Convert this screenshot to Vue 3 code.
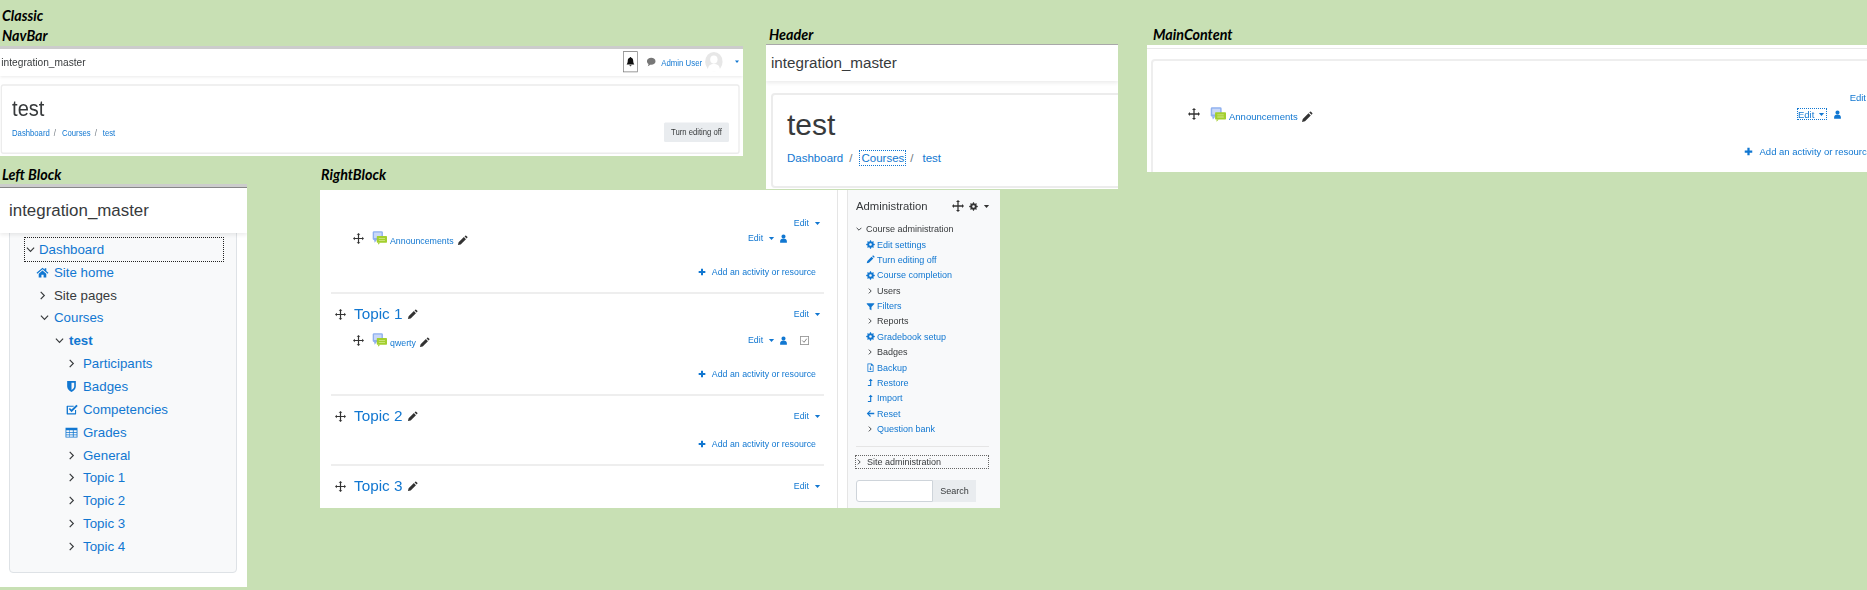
<script setup>
const gear = (() => {
  let d = ''
  const teeth = 8
  for (let i = 0; i < teeth * 4; i++) {
    const r = [11.5, 11.5, 8.5, 8.5][i % 4]
    const a = ((i - 0.5) / (teeth * 4)) * Math.PI * 2
    d += (i ? 'L' : 'M') + (12 + r * Math.cos(a)).toFixed(2) + ' ' + (12 + r * Math.sin(a)).toFixed(2)
  }
  return d + 'zM12 8.500a3.500 3.500 0 1 0 0 7 3.500 3.500 0 0 0 0-7z'
})()

const table = (() => {
  let d = 'M1 3h22v18H1z'
  for (const y of [8, 12.5, 17]) {
    for (const x of [2.5, 9, 16]) d += `M${x} ${y}h5.500v3h-5.500z`
  }
  return d
})()

const I = {
  move: 'M12 0l4 4h-2.700v6.700H20V8l4 4-4 4v-2.700h-6.700V20H16l-4 4-4-4h2.700v-6.700H4V16l-4-4 4-4v2.700h6.700V4H8z',
  pencil: 'M2 22l1.500-6L15 4.500l4.500 4.500L8 20.500zM16.500 3l1.500-1.500a1.500 1.500 0 0 1 2 0l2.500 2.500a1.500 1.500 0 0 1 0 2L21 7.500z',
  person: 'M12 12a5.500 5.500 0 1 0 0-11 5.500 5.500 0 0 0 0 11zM3 23v-4c0-4 3-6.500 5.500-6.500h7C18 12.500 21 15 21 19v4z',
  plus: 'M9 2h6v7h7v6h-7v7H9v-7H2V9h7z',
  caret: 'M3 7h18l-9 10z',
  home: 'M12 3L1 12.500l1.500 1.700L12 6l9.500 8.200 1.500-1.700-4-3.400V4h-3v2.500zM5 14.500V21h5v-5h4v5h5v-6.500L12 8.500z',
  shield: 'M4 2h16v10c0 5-4 8-8 10-4-2-8-5-8-10zM12 5v13.500c2.500-1.500 5-3.500 5-6.500V5z',
  check: 'M4 5h12v2H5.500v12h13v-6h2v7a1 1 0 0 1-1 1H4a1 1 0 0 1-1-1V6a1 1 0 0 1 1-1zM7 11l2-2 3 3 9-9 2.500 2.500L12 17z',
  table,
  gear,
  filter: 'M2 3h20v2.500L14.500 13v9l-5-3v-6L2 5.500z',
  file: 'M4 1h11l5 5v17H4zM6 3v18h12V7h-5V3zM11 9h2v6h2.500L12 19.500 8.500 15H11z',
  up: 'M5 21v-2.500h6V8H7l5.500-6L18 8h-4v13z',
  back: 'M11 3l2.200 2.200L8 10.300h14v3.400H8l5.200 5.100L11 21 2 12z',
  bell: 'M12 1a2 2 0 0 1 2 2c3.500.7 5 3.600 5 7 0 5 2 6 3 8H2c1-2 3-3 3-8 0-3.400 1.500-6.300 5-7a2 2 0 0 1 2-2zM9.500 20h5a2.500 2.500 0 0 1-5 0z',
  comment: 'M12 3c6 0 11 3.500 11 8s-5 8-11 8c-1 0-2 0-3-.3C7.500 20.500 5 21.500 3 22c1-1.300 2-3 2-4.800C2.500 15.700 1 13.500 1 11c0-4.500 5-8 11-8z',
}

const tree = [
  { label: 'Site home', pad: 20, icon: 'home' },
  { label: 'Site pages', pad: 20, chev: 'right', plain: true },
  { label: 'Courses', pad: 20, chev: 'down' },
  { label: 'test', pad: 35, chev: 'down', strong: true },
  { label: 'Participants', pad: 49, chev: 'right' },
  { label: 'Badges', pad: 49, icon: 'shield' },
  { label: 'Competencies', pad: 49, icon: 'check' },
  { label: 'Grades', pad: 49, icon: 'table' },
  { label: 'General', pad: 49, chev: 'right' },
  { label: 'Topic 1', pad: 49, chev: 'right' },
  { label: 'Topic 2', pad: 49, chev: 'right' },
  { label: 'Topic 3', pad: 49, chev: 'right' },
  { label: 'Topic 4', pad: 49, chev: 'right' },
]

const sections = [
  { key: 'intro', activity: { name: 'Announcements' }, add: true },
  { key: 't1', title: 'Topic 1', activity: { name: 'qwerty', done: true }, add: true },
  { key: 't2', title: 'Topic 2', add: true },
  { key: 't3', title: 'Topic 3' },
]

const admin = [
  { label: 'Edit settings', icon: 'gear' },
  { label: 'Turn editing off', icon: 'pencil' },
  { label: 'Course completion', icon: 'gear' },
  { label: 'Users', plain: true },
  { label: 'Filters', icon: 'filter' },
  { label: 'Reports', plain: true },
  { label: 'Gradebook setup', icon: 'gear' },
  { label: 'Badges', plain: true },
  { label: 'Backup', icon: 'file' },
  { label: 'Restore', icon: 'up' },
  { label: 'Import', icon: 'up' },
  { label: 'Reset', icon: 'back' },
  { label: 'Question bank', link: true },
]
</script>

<template>
  <div class="canvas">
    <span class="label l-classic">Classic</span>
    <span class="label l-navbar">NavBar</span>
    <span class="label l-left">Left Block</span>
    <span class="label l-right">RightBlock</span>
    <span class="label l-header">Header</span>
    <span class="label l-main">MainContent</span>

    <!-- NavBar -->
    <section class="panel p-navbar soft">
      <div class="squeezed">
        <div class="rule thick"></div>
        <div class="brand-bar nav-bar">
          <span class="brand">integration_master</span>
          <div class="nav-right">
            <span class="bell-box">
              <svg class="ic s14 black" viewBox="0 0 24 24"><path :d="I.bell" /></svg>
            </span>
            <svg class="ic s14 grey comment" viewBox="0 0 24 24"><path :d="I.comment" /></svg>
            <a class="link user">Admin User</a>
            <svg class="avatar" viewBox="0 0 26 26">
              <circle cx="13" cy="13" r="13" fill="#e7e7e7" />
              <circle cx="13" cy="10" r="5.500" fill="#fff" />
              <path d="M4 24c0-6 4-8 9-8s9 2 9 8a13 13 0 0 1-18 0z" fill="#fff" />
            </svg>
            <svg class="ic s8 blue nav-caret" viewBox="0 0 24 24"><path :d="I.caret" /></svg>
          </div>
        </div>
        <div class="head-card nav-card">
          <div>
            <h1 class="title">test</h1>
            <nav class="crumbs">
              <a class="link">Dashboard</a><i>/</i><a class="link">Courses</a><i>/</i><a class="link">test</a>
            </nav>
          </div>
          <button class="edit-btn">Turn editing off</button>
        </div>
      </div>
    </section>

    <!-- Header -->
    <section class="panel p-header">
      <div class="rule"></div>
      <div class="brand-bar header-bar"><span class="brand">integration_master</span></div>
      <div class="head-card header-card">
        <h1 class="title">test</h1>
        <nav class="crumbs">
          <a class="link">Dashboard</a><i>/</i><a class="link focus">Courses</a><i>/</i><a class="link">test</a>
        </nav>
      </div>
    </section>

    <!-- Left block -->
    <section class="panel p-left">
      <div class="rule thick-left"></div>
      <div class="left-bar"><span>integration_master</span></div>
      <div class="tree-card">
        <div class="tree-row focused">
          <span class="slot">
            <svg class="chev" viewBox="0 0 10 10"><path d="M1 3l4 4 4-4" /></svg>
          </span>
          <a class="link">Dashboard</a>
        </div>
        <div
          v-for="row in tree"
          :key="row.label"
          class="tree-row"
          :style="{ paddingLeft: row.pad + 'px' }"
        >
          <span class="slot">
            <svg v-if="row.chev === 'right'" class="chev side" viewBox="0 0 10 10"><path d="M3 1l4 4-4 4" /></svg>
            <svg v-else-if="row.chev === 'down'" class="chev open" viewBox="0 0 10 10"><path d="M1 3l4 4 4-4" /></svg>
            <svg v-else class="ic s13 blue" viewBox="0 0 24 24" fill-rule="evenodd"><path :d="I[row.icon]" /></svg>
          </span>
          <span v-if="row.plain" class="dark">{{ row.label }}</span>
          <a v-else class="link" :class="{ strong: row.strong }">{{ row.label }}</a>
        </div>
      </div>
    </section>

    <!-- Right block -->
    <section class="panel p-right soft">
      <div class="course">
        <div v-for="s in sections" :key="s.key" class="sec" :class="{ intro: !s.title, last: s.key === 't3' }">
          <div class="head">
            <template v-if="s.title">
              <span class="drag"><svg class="ic s10 dark-ic" viewBox="0 0 24 24"><path :d="I.move" /></svg></span>
              <a class="link sec-title">{{ s.title }}</a>
              <svg class="ic s10 dark-ic" viewBox="0 0 24 24"><path :d="I.pencil" /></svg>
            </template>
            <span class="edit top-edit link">Edit
              <svg class="ic s7 blue" viewBox="0 0 24 24"><path :d="I.caret" /></svg>
            </span>
          </div>
          <div v-if="s.activity" class="act">
            <svg class="ic s10 dark-ic" viewBox="0 0 24 24"><path :d="I.move" /></svg>
            <svg class="chat" viewBox="0 0 22 20">
              <rect x="1" y="0" width="15" height="13" rx="2" fill="#8fb0ef" />
              <rect x="3" y="2" width="11" height="8" fill="#c9d8f8" />
              <path d="M3 13l1 4 3-4z" fill="#8fb0ef" />
              <rect x="7" y="7" width="15" height="10" rx="1" fill="#a3cf2e" />
              <path d="M10 10h9v1.200h-9zM10 12.800h9V14h-9z" fill="#d6ea8f" />
              <path d="M9 17v3l3-3z" fill="#a3cf2e" />
            </svg>
            <span class="act-name">
              <a class="link">{{ s.activity.name }}</a>
              <svg class="ic s10 dark-ic" viewBox="0 0 24 24"><path :d="I.pencil" /></svg>
            </span>
            <span class="act-tools">
              <span class="edit link">Edit
                <svg class="ic s7 blue" viewBox="0 0 24 24"><path :d="I.caret" /></svg>
              </span>
              <svg class="ic s9 blue" viewBox="0 0 24 24"><path :d="I.person" /></svg>
              <svg v-if="s.activity.done" class="done" viewBox="0 0 10 10">
                <rect x=".5" y=".5" width="9" height="9" fill="none" stroke="#999" />
                <path d="M2.500 5l2 2 3-4" fill="none" stroke="#777" />
              </svg>
            </span>
          </div>
          <div v-if="s.add" class="add">
            <svg class="ic s8 blue" viewBox="0 0 24 24"><path :d="I.plus" /></svg>
            <a class="link">Add an activity or resource</a>
          </div>
        </div>
      </div>

      <aside class="admin">
        <div class="admin-head">
          <span class="admin-title">Administration</span>
          <span class="admin-tools">
            <svg class="ic s11 dark-ic" viewBox="0 0 24 24"><path :d="I.move" /></svg>
            <svg class="ic s9 dark-ic" viewBox="0 0 24 24" fill-rule="evenodd"><path :d="I.gear" /></svg>
            <svg class="ic s7 dark-ic" viewBox="0 0 24 24"><path :d="I.caret" /></svg>
          </span>
        </div>
        <div class="admin-row root">
          <span class="a-slot"><svg class="chev tiny" viewBox="0 0 10 10"><path d="M1 3l4 4 4-4" /></svg></span>
          <span class="dark">Course administration</span>
        </div>
        <div v-for="row in admin" :key="row.label" class="admin-row">
          <span class="a-slot">
            <svg v-if="row.icon" class="ic s9 blue" viewBox="0 0 24 24" fill-rule="evenodd"><path :d="I[row.icon]" /></svg>
            <svg v-else class="chev tiny" viewBox="0 0 10 10"><path d="M3 1l4 4-4 4" /></svg>
          </span>
          <span v-if="row.plain" class="dark">{{ row.label }}</span>
          <a v-else class="link">{{ row.label }}</a>
        </div>
        <div class="admin-hr"></div>
        <div class="site-admin">
          <svg class="chev tiny" viewBox="0 0 10 10"><path d="M3 1l4 4-4 4" /></svg>
          <span class="dark">Site administration</span>
        </div>
        <div class="search">
          <span class="search-input"></span>
          <span class="search-btn">Search</span>
        </div>
      </aside>
    </section>

    <!-- Main content -->
    <section class="panel p-main soft">
      <div class="main-rule"></div>
      <div class="main-card">
        <div class="m-top"><span class="edit link">Edit
          <svg class="ic s7 blue" viewBox="0 0 24 24"><path :d="I.caret" /></svg>
        </span></div>
        <div class="m-act">
          <svg class="ic s11 dark-ic" viewBox="0 0 24 24"><path :d="I.move" /></svg>
          <svg class="chat wide" viewBox="0 0 22 20">
            <rect x="1" y="0" width="15" height="13" rx="2" fill="#8fb0ef" />
            <rect x="3" y="2" width="11" height="8" fill="#c9d8f8" />
            <path d="M3 13l1 4 3-4z" fill="#8fb0ef" />
            <rect x="7" y="7" width="15" height="10" rx="1" fill="#a3cf2e" />
            <path d="M10 10h9v1.200h-9zM10 12.800h9V14h-9z" fill="#d6ea8f" />
            <path d="M9 17v3l3-3z" fill="#a3cf2e" />
          </svg>
          <span class="act-name">
            <a class="link">Announcements</a>
            <svg class="ic s11 dark-ic" viewBox="0 0 24 24"><path :d="I.pencil" /></svg>
          </span>
          <span class="m-tools">
            <span class="m-edit link">Edit
              <svg class="ic s7 blue" viewBox="0 0 24 24"><path :d="I.caret" /></svg>
            </span>
            <svg class="ic s9 blue" viewBox="0 0 24 24"><path :d="I.person" /></svg>
          </span>
        </div>
        <div class="m-add">
          <svg class="ic s9 blue" viewBox="0 0 24 24"><path :d="I.plus" /></svg>
          <a class="link">Add an activity or resource</a>
        </div>
      </div>
    </section>
  </div>
</template>

<style>
html, body { margin: 0; background: #c8e0b4; }
</style>

<style scoped>
.canvas {
  position: relative;
  width: 1867px;
  height: 590px;
  overflow: hidden;
  background: #c8e0b4;
  font-family: "Liberation Sans", Arial, sans-serif;
  color: #373a3c;
}
.label {
  position: absolute;
  font: italic 700 14.300px/18px Lato, "Liberation Sans", sans-serif;
  color: #000;
}
.l-classic { left: 2px; top: 7px; }
.l-navbar { left: 2px; top: 27px; }
.l-left { left: 2px; top: 166px; }
.l-right { left: 321px; top: 166px; }
.l-header { left: 769px; top: 26px; }
.l-main { left: 1153px; top: 26px; }

.panel { position: absolute; background: #fff; overflow: hidden; }
.soft { filter: blur(0.35px); }
.p-navbar { left: 0; top: 46px; width: 743px; height: 110px; }
.p-header { left: 766px; top: 44px; width: 352px; height: 145px; }
.p-left { left: 0; top: 184px; width: 247px; height: 403px; }
.p-right { left: 320px; top: 190px; width: 680px; height: 318px; display: flex; }
.p-main { left: 1147px; top: 45px; width: 720px; height: 127px; }

.link { color: #1177d1; text-decoration: none; }
.dark { color: #373a3c; }
.strong { font-weight: 700; }

.ic { display: block; flex: none; fill: currentColor; }
.s7 { width: 7px; height: 7px; }
.s8 { width: 8px; height: 10px; }
.s9 { width: 9px; height: 11px; }
.s10 { width: 11px; height: 11px; }
.s11 { width: 12px; height: 12px; }
.s13 { width: 13px; height: 13px; }
.s14 { width: 14px; height: 14px; }
.blue { color: #1177d1; }
.black { color: #111; }
.grey { color: #777; }
.dark-ic { color: #333; }

/* shared page heading */
.squeezed {
  width: 1109px;
  height: 147px;
  transform: scale(0.67, 0.75);
  transform-origin: 0 0;
}
.rule { height: 1px; background: #aaa; }
.rule.thick { height: 4px; background: #ccc; }
.brand-bar {
  box-sizing: border-box;
  height: 36px;
  display: flex;
  align-items: center;
  padding-bottom: 2px;
  background: #fff;
  box-shadow: 0 2px 4px rgba(0, 0, 0, 0.08);
}
.brand { font-size: 15.2px; color: #373a3c; }
.header-bar { padding-left: 5px; }
.nav-bar { padding-left: 2px; padding-right: 2px; }
.nav-right { margin-left: auto; display: flex; align-items: center; }
.bell-box {
  width: 22px;
  height: 28px;
  box-sizing: border-box;
  border: 1px solid #777;
  display: flex;
  align-items: center;
  justify-content: center;
}
.comment { margin-left: 13px; }
.user { margin-left: 8px; font-size: 11.7px; }
.avatar { width: 27px; height: 26px; margin-left: 4px; }
.nav-caret { margin-left: 17px; margin-right: 3px; }

.head-card {
  box-sizing: border-box;
  background: #fff;
  border: 2px solid #ececec;
  border-radius: 4px;
  padding: 12px 14px 0;
}
.nav-card {
  width: 1103px;
  height: 93px;
  margin: 11px 0 0 1px;
  display: flex;
  justify-content: space-between;
  align-items: flex-end;
  padding-bottom: 14px;
  padding-left: 15px;
}
.nav-card > div { align-self: flex-start; }
.header-card { width: 400px; height: 95px; margin: 12px 0 0 5px; }
.title { margin: 0; font-size: 30px; line-height: 36px; font-weight: 400; color: #373a3c; }
.crumbs { margin-top: 7px; font-size: 11.5px; line-height: 17px; white-space: nowrap; }
.crumbs i { font-style: normal; color: #6c757d; margin: 0 9px 0 6px; }
.focus { outline: 1px dotted #1177d1; outline-offset: 1px; }
.edit-btn {
  width: 97px;
  height: 26px;
  padding: 0;
  border: 0;
  border-radius: 2px;
  background: #e9ecef;
  color: #373a3c;
  font: 11.5px "Liberation Sans", Arial, sans-serif;
}

/* left block */
.rule.thick-left { height: 3px; background: #ccc; border-bottom: 1px solid #888; }
.left-bar {
  position: relative;
  height: 45px;
  padding-left: 9px;
  display: flex;
  align-items: center;
  background: #fff;
  box-shadow: 0 2px 4px rgba(0, 0, 0, 0.08);
  font-size: 16.900px;
  color: #373a3c;
}
.tree-card {
  box-sizing: border-box;
  width: 228px;
  height: 349px;
  margin: -9px 0 0 9px;
  padding-top: 13px;
  background: #f8f9fa;
  border: 1px solid #dee2e6;
  border-radius: 4px;
  font-size: 13.300px;
}
.tree-row { height: 22.85px; display: flex; align-items: center; white-space: nowrap; }
.tree-row.focused {
  box-sizing: border-box;
  width: 198px;
  margin-left: 15px;
  outline: 1px dotted #222;
}
.slot { width: 24px; flex: none; display: flex; justify-content: center; align-items: center; }
.focused .slot { width: 14px; justify-content: flex-start; padding-left: 1px; box-sizing: border-box; }
.chev { width: 9px; height: 9px; flex: none; fill: none; stroke: #373a3c; stroke-width: 1.300; }
.chev.open { margin-left: 4px; }
.chev.tiny { width: 6px; height: 6px; stroke-width: 1.500; }

/* right block */
.course {
  box-sizing: border-box;
  width: 518px;
  padding: 0 13px 0 11px;
  border-right: 1px solid #e5e5e5;
  font-size: 8.800px;
}
.sec { padding: 12px 0; border-bottom: 2px solid #eee; }
.sec.intro { padding: 25px 0 12px; }
.sec.last { border-bottom: 0; }
.head { height: 16px; display: flex; align-items: center; }
.drag { width: 18px; flex: none; display: flex; justify-content: center; }
.sec-title { margin: 0 4.500px 0 5px; font-size: 15.300px; white-space: nowrap; }
.edit { display: inline-flex; align-items: center; gap: 5px; white-space: nowrap; }
.top-edit { margin-left: auto; padding-right: 3px; }
.act { height: 16px; margin-top: 10px; padding-left: 22px; display: flex; align-items: center; }
.intro .act { margin-top: -1px; }
.chat { width: 15px; height: 14px; flex: none; margin-left: 8px; }
.act-name { display: inline-flex; align-items: center; gap: 3px; margin-left: 3px; padding-top: 5px; white-space: nowrap; }
.act-tools { margin-left: auto; width: 76px; display: flex; align-items: center; gap: 4px; }
.done { width: 9px; height: 9px; flex: none; margin-left: 8px; }
.add { height: 16px; margin-top: 18px; padding-right: 8px; display: flex; justify-content: flex-end; align-items: center; gap: 6px; white-space: nowrap; }
.head + .add { margin-top: 12px; }

.admin {
  box-sizing: border-box;
  width: 153px;
  margin-left: 9px;
  padding: 8px 0 0 8px;
  background: #f8f9fa;
  border-left: 1px solid #e5e5e5;
  font-size: 9px;
}
.admin-head { height: 16px; display: flex; align-items: center; }
.admin-title { font-size: 11.300px; color: #373a3c; }
.admin-tools { margin-left: auto; padding-right: 10px; display: flex; align-items: center; gap: 5px; }
.admin-row { height: 15.380px; padding-left: 7px; display: flex; align-items: center; white-space: nowrap; }
.admin-row.root { padding-left: 0; margin-top: 7.500px; }
.a-slot { width: 14px; flex: none; display: flex; justify-content: center; }
.root .a-slot { width: 10px; justify-content: flex-start; }
.admin-hr { width: 133px; margin-top: 9px; border-top: 1px solid #e5e5e5; }
.site-admin {
  box-sizing: border-box;
  width: 134px;
  height: 14px;
  margin: 8px 0 0 -1px;
  outline: 1px dotted #666;
  outline-offset: -1px;
  display: flex;
  align-items: center;
  gap: 5px;
  padding-left: 1px;
}
.search { margin-top: 11px; display: flex; height: 22px; }
.search-input {
  box-sizing: border-box;
  width: 77px;
  background: #fff;
  border: 1px solid #ced4da;
  border-radius: 3px 0 0 3px;
}
.search-btn {
  width: 43px;
  background: #e9ecef;
  color: #373a3c;
  display: flex;
  align-items: center;
  justify-content: center;
}

/* main content */
.main-rule { height: 3px; border-bottom: 1px solid #e8e8e8; }
.main-card {
  box-sizing: border-box;
  width: 729px;
  height: 140px;
  margin: 10px 0 0 4px;
  padding: 28px 0 0 35px;
  border: 2px solid #eee;
  border-radius: 4px;
  font-size: 9.500px;
}
.m-top { height: 16px; display: flex; justify-content: flex-end; }
.m-act { height: 16px; margin-top: 1px; display: flex; align-items: center; }
.chat.wide { width: 16px; height: 15px; margin-left: 10px; }
.m-tools { margin-left: auto; width: 81px; display: flex; align-items: center; gap: 6px; }
.m-edit {
  box-sizing: border-box;
  width: 30px;
  height: 12px;
  display: inline-flex;
  align-items: center;
  gap: 4px;
  padding-left: 1px;
  outline: 1px dotted #1177d1;
  outline-offset: -1px;
}
.m-add { height: 16px; margin-top: 21px; padding-right: 6px; display: flex; justify-content: flex-end; align-items: center; gap: 7px; white-space: nowrap; }
</style>
